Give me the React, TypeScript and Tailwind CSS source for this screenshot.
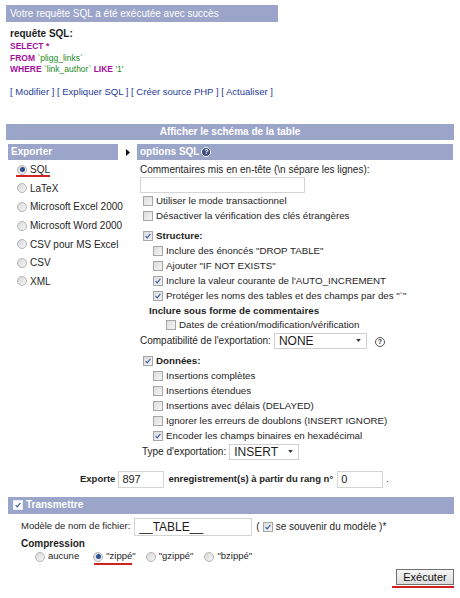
import type { ReactNode } from 'react'

const barClass = 'bg-[#9ba5c9] text-white font-bold h-[16px] leading-[16px] text-[10px]'

function Box({ checked = false, white = false }: { checked?: boolean; white?: boolean }) {
  return (
    <span
      className={`inline-flex h-[10px] w-[10px] shrink-0 items-center justify-center border ${
        white ? 'border-[#e8ecf5] bg-white' : 'border-[#a6a6a6] bg-gradient-to-br from-[#dcdcdc] to-[#f5f5f5]'
      }`}
    >
      {checked && (
        <svg viewBox="0 0 10 10" className="h-[8px] w-[8px]">
          <path d="M2 5.2 L4 7.4 L8 2.4" fill="none" stroke="#3a5aa0" strokeWidth="1.4" />
        </svg>
      )}
    </span>
  )
}

function Radio({ on = false }: { on?: boolean }) {
  return (
    <span className="inline-flex h-[10px] w-[10px] shrink-0 items-center justify-center rounded-full border border-[#b4b4b4] bg-gradient-to-br from-[#d8d8d8] to-[#f6f6f6]">
      {on && <span className="h-[5px] w-[5px] rounded-full bg-[#2f4f8f]" />}
    </span>
  )
}

function Check({ checked, children, bold = false, indent = '' }: { checked?: boolean; children: ReactNode; bold?: boolean; indent?: string }) {
  return (
    <div className={`flex h-[15px] items-center gap-[3px] whitespace-nowrap ${indent}`}>
      <Box checked={checked} />
      <span className={bold ? 'font-bold' : ''}>{children}</span>
    </div>
  )
}

function Help() {
  return (
    <span className="inline-flex h-[10px] w-[10px] items-center justify-center rounded-full border border-[#555] text-[7px] font-bold leading-none text-[#333]">
      ?
    </span>
  )
}

function Select({ value, width }: { value: string; width: string }) {
  return (
    <span className={`inline-flex h-[16px] ${width} items-center justify-between border border-[#d0d0d0] bg-white pl-[4px] pr-[5px] text-[12px]`}>
      {value}
      <svg viewBox="0 0 6 4" className="h-[3px] w-[5px]">
        <path d="M0 0 L6 0 L3 4 Z" fill="#333" />
      </svg>
    </span>
  )
}

const formats = ['SQL', 'LaTeX', 'Microsoft Excel 2000', 'Microsoft Word 2000', 'CSV pour MS Excel', 'CSV', 'XML']

export default function App() {
  return (
    <div className="relative h-[598px] w-[460px] overflow-hidden bg-white text-[10px] text-[#1e1e1e] font-['Liberation_Sans',Arial,sans-serif]">
      <div className="pl-[6px] pt-[5px]">
        <div className="h-[17px] w-[272px] bg-[#9ba5c9] pl-[4px] text-[10px] leading-[17px] text-white">
          Votre requête SQL a été exécutée avec succès
        </div>
        <div className="pl-[4px] pt-[6px]">
          <div className="h-[12px] font-bold leading-[12px]">requête SQL:</div>
          <div className="mt-[1px] text-[8.5px] leading-[11.5px]">
            <div className="font-bold text-[#a0109c]">SELECT *</div>
            <div>
              <span className="font-bold text-[#a0109c]">FROM</span> <span className="text-[#1c8a1c]">`pligg_links`</span>
            </div>
            <div>
              <span className="font-bold text-[#a0109c]">WHERE</span> <span className="text-[#1c8a1c]">`link_author`</span>{' '}
              <span className="font-bold text-[#a0109c]">LIKE</span> <span className="text-[#1c8a1c]">'1'</span>
            </div>
          </div>
          <div className="mt-[9px] h-[14px] text-[9.5px] leading-[14px] text-[#1f3c99]">
            [ Modifier ] [ Expliquer SQL ] [ Créer source PHP ] [ Actualiser ]
          </div>
        </div>
      </div>

      <div className={`mx-[6px] mt-[25px] text-center ${barClass}`}>Afficher le schéma de la table</div>

      <div className="mt-[4px] flex pl-[8px]">
        <div className="w-[110px] shrink-0">
          <div className={`pl-[3px] ${barClass}`}>Exporter</div>
          <div className="mt-[1px] flex flex-col pl-[9px]">
            {formats.map((f, i) => (
              <div key={f} className="relative flex h-[18.6px] items-center gap-[3px] whitespace-nowrap">
                <Radio on={i === 0} />
                <span>{f}</span>
                {i === 0 && <span className="absolute left-[-1px] top-[14px] h-[2px] w-[34px] bg-[#d21f1f]" />}
              </div>
            ))}
          </div>
        </div>

        <div className="flex w-[19px] shrink-0 justify-center pt-[5px]">
          <svg viewBox="0 0 4 7" className="h-[7px] w-[4px]">
            <path d="M0 0 L4 3.5 L0 7 Z" fill="#111" />
          </svg>
        </div>

        <div className="w-[316px] shrink-0">
          <div className={`flex items-center gap-[2px] pl-[3px] ${barClass}`}>
            options SQL
            <span className="inline-flex h-[10px] w-[10px] items-center justify-center rounded-full border border-white bg-[#3b4a7a] text-[7px] leading-none">?</span>
          </div>
          <div className="pl-[3px]">
            <div className="mt-[3px] h-[14px] leading-[14px]">Commentaires mis en en-tête (\n sépare les lignes):</div>
            <div className="h-[16px] w-[165px] border border-[#d4d4d4] bg-white" />
            <div className="mt-[1px] pl-[3px] text-[9.75px]">
              <Check>Utiliser le mode transactionnel</Check>
              <Check>Désactiver la vérification des clés étrangères</Check>
              <div className="mt-[5px]">
                <Check checked bold>Structure:</Check>
              </div>
              <div className="pl-[10px]">
                <Check>Inclure des énoncés "DROP TABLE"</Check>
                <Check>Ajouter "IF NOT EXISTS"</Check>
                <Check checked>Inclure la valeur courante de l'AUTO_INCREMENT</Check>
                <Check checked>Protéger les noms des tables et des champs par des "`"</Check>
              </div>
              <div className="h-[14px] pl-[6px] font-bold leading-[14px]">Inclure sous forme de commentaires</div>
              <Check indent="pl-[23px]">Dates de création/modification/vérification</Check>
            </div>
            <div className="flex h-[16px] items-center gap-[3px]">
              <span>Compatibilité de l'exportation:</span>
              <Select value="NONE" width="w-[93px]" />
              <span className="ml-[5px]">
                <Help />
              </span>
            </div>
            <div className="mt-[5px] pl-[3px] text-[9.75px]">
              <Check checked bold>Données:</Check>
              <div className="pl-[10px]">
                <Check>Insertions complètes</Check>
                <Check>Insertions étendues</Check>
                <Check>Insertions avec délais (DELAYED)</Check>
                <Check>Ignorer les erreurs de doublons (INSERT IGNORE)</Check>
                <Check checked>Encoder les champs binaires en hexadécimal</Check>
              </div>
            </div>
            <div className="flex h-[16px] items-center gap-[3px] pl-[2px]">
              <span>Type d'exportation:</span>
              <Select value="INSERT" width="w-[70px]" />
            </div>
          </div>
        </div>
      </div>

      <div className="mt-[11px] flex h-[17px] items-center pl-[80px] text-[9.5px]">
        <span className="font-bold">Exporte</span>
        <span className="ml-[3px] h-[17px] w-[46px] border border-[#d4d4d4] pl-[3px] text-[11px] leading-[15px]">897</span>
        <span className="ml-[4px] font-bold">enregistrement(s) à partir du rang n°</span>
        <span className="ml-[4px] h-[17px] w-[46px] border border-[#d4d4d4] pl-[3px] text-[11px] leading-[15px]">0</span>
        <span className="ml-[3px]">.</span>
      </div>

      <div className={`ml-[8px] mr-[6px] mt-[9px] flex h-[17px] items-center gap-[3px] pl-[5px] ${barClass}`}>
        <Box checked white />
        Transmettre
      </div>

      <div className="pl-[21px] text-[9.5px]">
        <div className="mt-[4px] flex h-[18px] items-center">
          <span>Modèle de nom de fichier:</span>
          <span className="ml-[4px] h-[18px] w-[118px] border border-[#d4d4d4] pl-[4px] text-[12px] leading-[16px]">__TABLE__</span>
          <span className="ml-[4px] flex items-center gap-[3px] text-[10px]">
            ( <Box checked /> se souvenir du modèle )*
          </span>
        </div>
        <div className="mt-[1px] h-[14px] text-[10px] font-bold leading-[14px]">Compression</div>
        <div className="flex h-[12px] items-center pl-[14px]">
          <span className="flex items-center gap-[3px]">
            <Radio /> aucune
          </span>
          <span className="relative ml-[14px] flex items-center gap-[3px]">
            <Radio on /> "zippé"
            <span className="absolute left-[1px] top-[14px] h-[2px] w-[38px] bg-[#d21f1f]" />
          </span>
          <span className="ml-[10px] flex items-center gap-[3px]">
            <Radio /> "gzippé"
          </span>
          <span className="ml-[11px] flex items-center gap-[3px]">
            <Radio /> "bzippé"
          </span>
        </div>
      </div>

      <div className="mt-[6px] flex flex-col items-end pr-[6px]">
        <button className="h-[16px] w-[58px] border border-[#707070] bg-gradient-to-b from-[#f6f6f6] to-[#dcdcdc] text-[11px] leading-[14px] text-[#111]">
          Exécuter
        </button>
        <span className="mt-[1px] h-[2px] w-[62px] bg-[#d21f1f]" />
      </div>
    </div>
  )
}
